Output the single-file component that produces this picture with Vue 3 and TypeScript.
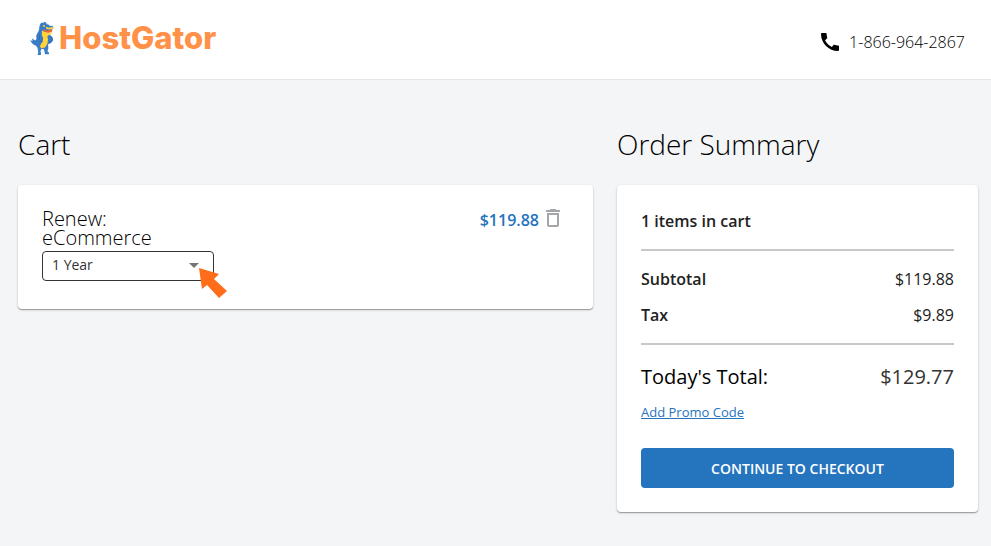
<script setup lang="ts">
import { computed, ref } from 'vue'

interface Term {
  years: number
  label: string
  price: number
}

const terms: Term[] = [{ years: 1, label: '1 Year', price: 119.88 }]
const selectedYears = ref(1)
const tax = 9.89

const subtotal = computed(
  () => terms.find((t) => t.years === selectedYears.value)?.price ?? 0,
)
const total = computed(() => subtotal.value + tax)

const money = (value: number): string => `$${value.toFixed(2)}`
</script>

<template>
  <div class="page">
    <header class="header">
      <a class="brand" href="#">
        <svg class="mascot" viewBox="0 0 26 34" aria-hidden="true">
          <path
            fill="#3a7cc8"
            d="M9.500 5 10.500 2.500 12 1.500l1.500 .5L14.500.8l1.500 .6 .8 1.800 1.700 .3 1.500 1.500 2.500-.3 1 1.500-1 2-7 3.500 2 2.500 2.500-.5 2.500 2.500 .6 3-2 2.800-3 1.200.2 4-.8 3 1.500 1.500v1.600h-4l-1-5-2.500-.5-1 2.500.6 2.500-.4 1.500H7.500l.8-3-.8-4.500-1.500-2-3-1.500L0 19.500l2.800.3-1.200-2.600 3.600 2.200L6.500 18l-.3-3.500L8 11l1-2z"
          />
          <path
            fill="#ffd236"
            d="M12 9.500l3 1.500 4 2-1 2-.7 .5.8 3-.8 4.500-2.300 3.600-3.200.6-2-1.500 1.200-2.700 1.800-2.500.3-3.500-1.300-3z"
          />
          <path fill="#ffd236" d="M16 5.800l3 .9 4-1 .5 1.600-2.800 1.200-4.500-.5z" />
          <path fill="#ffd236" d="M14.500 10.500l3.500 1.800 4.500-1.300-2 2.600-3.500 .6z" />
          <path fill="#f0662e" d="M13 8.300l4 1.200 5.500-1-.6 2.300-3.900 1.200-4-1.700z" />
          <path
            fill="none"
            stroke="#2e6bb4"
            stroke-width="1"
            d="M9.500 14l-.5 4 3 3M21 16l1.500 3-3 2.500"
          />
          <circle cx="14" cy="5" r="1" fill="#ffd236" />
        </svg>
        <span class="wordmark">HostGator</span>
      </a>
      <a class="phone" href="tel:18669642867">
        <svg class="phone-icon" viewBox="3 3 18 18" aria-hidden="true">
          <path
            d="M20.010 15.380c-1.230 0-2.420-.2-3.530-.56-.35-.12-.74-.03-1.010.24l-1.570 1.970c-2.830-1.350-5.480-3.900-6.890-6.830l1.950-1.660c.27-.28.35-.67.24-1.020-.37-1.110-.56-2.300-.56-3.530 0-.54-.45-.99-.99-.99H4.190C3.650 3 3 3.240 3 3.990 3 13.280 10.730 21 20.010 21c.71 0 .99-.63.99-1.180v-3.450c0-.54-.45-.99-.99-.99z"
          />
        </svg>
        <span>1-866-964-2867</span>
      </a>
    </header>

    <main class="content">
      <section>
        <h1 class="heading">Cart</h1>
        <div class="card cart-card">
          <div class="product">
            <h2 class="product-name">Renew:<br />eCommerce</h2>
            <div class="term">
              <select v-model="selectedYears" class="term-select" aria-label="Term">
                <option v-for="t in terms" :key="t.years" :value="t.years">
                  {{ t.label }}
                </option>
              </select>
              <svg class="caret" viewBox="0 0 10 5" aria-hidden="true">
                <path d="M0 0h10L5 5z" />
              </svg>
              <svg class="pointer" viewBox="0 0 28 30" aria-hidden="true">
                <path d="M0 0 20 6 15 11 28 23 20 30 8 17 3 21z" />
              </svg>
            </div>
          </div>
          <div class="price-group">
            <span class="price">{{ money(subtotal) }}</span>
            <button class="remove" type="button" aria-label="Remove item">
              <svg viewBox="5 3 14 18" aria-hidden="true">
                <path
                  d="M6 19c0 1.100.9 2 2 2h8c1.100 0 2-.9 2-2V7H6v12zM8 9h8v10H8V9zm7.500-5l-1-1h-5l-1 1H5v2h14V4h-3.500z"
                />
              </svg>
            </button>
          </div>
        </div>
      </section>

      <section>
        <h1 class="heading">Order Summary</h1>
        <div class="card summary-card">
          <p class="count">{{ terms.length }} items in cart</p>
          <dl class="lines">
            <div class="line">
              <dt>Subtotal</dt>
              <dd>{{ money(subtotal) }}</dd>
            </div>
            <div class="line">
              <dt>Tax</dt>
              <dd>{{ money(tax) }}</dd>
            </div>
          </dl>
          <div class="total">
            <span>Today's Total:</span>
            <span class="total-value">{{ money(total) }}</span>
          </div>
          <a class="promo" href="#">Add Promo Code</a>
          <button class="checkout" type="button">CONTINUE TO CHECKOUT</button>
        </div>
      </section>
    </main>
  </div>
</template>

<style>
body {
  margin: 0;
  background: #f4f5f7;
}
</style>

<style scoped>
.page {
  min-height: 100vh;
  box-sizing: border-box;
  background: #f4f5f7;
  color: #000;
  font-family: 'Open Sans', 'Noto Sans', sans-serif;
}

.header {
  display: flex;
  justify-content: space-between;
  box-sizing: border-box;
  height: 80px;
  padding: 20px 26px 0 30px;
  background: #fff;
  border-bottom: 1px solid #e3e5ea;
}

.brand {
  display: flex;
  align-items: center;
  gap: 3px;
  height: 36px;
  color: #ff9148;
  text-decoration: none;
}

.mascot {
  width: 26px;
  height: 34px;
}

.wordmark {
  font-family: Inter, 'Liberation Sans', sans-serif;
  font-size: 31px;
  font-weight: 800;
  line-height: 36px;
}

.phone {
  display: flex;
  align-items: center;
  gap: 10px;
  height: 44px;
  color: #000;
  font-size: 16px;
  font-weight: 300;
  text-decoration: none;
}

.phone-icon {
  width: 18px;
  height: 18px;
  fill: #000;
}

.content {
  display: grid;
  grid-template-columns: minmax(0, 1fr) 361px;
  align-items: start;
  gap: 24px;
  padding: 44px 13px 32px 18px;
}

.heading {
  margin: 0 0 20px;
  font-size: 28px;
  font-weight: 300;
  line-height: 41px;
}

.card {
  box-sizing: border-box;
  padding: 24px;
  background: #fff;
  border-radius: 4px;
  box-shadow: 0 1px 1px rgba(0, 0, 0, 0.3), 0 1px 3px rgba(0, 0, 0, 0.15);
}

.cart-card {
  display: flex;
  justify-content: space-between;
  align-items: flex-start;
  padding-bottom: 28px;
}

.product-name {
  margin: 0 0 4px;
  color: #000;
  font-size: 20px;
  font-weight: 300;
  line-height: 19px;
}

.term {
  position: relative;
  width: 172px;
}

.term-select {
  appearance: none;
  display: block;
  box-sizing: border-box;
  width: 100%;
  height: 30px;
  padding: 0 28px 3px 9px;
  border: 1px solid #333;
  border-radius: 4px;
  background: #fff;
  color: #333;
  font: 14px 'Open Sans', 'Noto Sans', sans-serif;
}

.caret {
  position: absolute;
  top: 12px;
  right: 15px;
  width: 10px;
  height: 5px;
  fill: #757575;
  pointer-events: none;
}

.pointer {
  position: absolute;
  top: 17px;
  left: 157px;
  width: 28px;
  height: 30px;
  fill: #ff6d1a;
  pointer-events: none;
}

.price-group {
  display: flex;
  align-items: center;
  gap: 7px;
  padding-right: 9px;
}

.price {
  color: #2574be;
  font-size: 16px;
  font-weight: 600;
  line-height: 22px;
}

.remove {
  display: block;
  padding: 0 0 4px;
  border: 0;
  background: none;
  cursor: pointer;
}

.remove svg {
  display: block;
  width: 14px;
  height: 18px;
  fill: #a4a7aa;
}

.count {
  margin: 0;
  padding-bottom: 16px;
  color: #222;
  font-size: 16px;
  font-weight: 600;
  line-height: 24px;
}

.lines {
  margin: 0;
  padding: 16px 0;
  border: solid #c8c8c8;
  border-width: 2px 0;
}

.line {
  display: flex;
  justify-content: space-between;
  font-size: 16px;
  line-height: 24px;
}

.line + .line {
  margin-top: 12px;
}

.line dt {
  color: #222;
  font-weight: 600;
}

.line dd {
  margin: 0;
  color: #222;
}

.total {
  display: flex;
  justify-content: space-between;
  padding-top: 18px;
  font-size: 20px;
  line-height: 28px;
}

.total-value {
  color: #333;
}

.promo {
  display: block;
  width: fit-content;
  margin: 11px 0 26px;
  color: #2574be;
  font-size: 13px;
  line-height: 20px;
}

.checkout {
  display: block;
  width: 100%;
  height: 40px;
  padding: 0;
  border: 0;
  border-radius: 4px;
  background: #2574be;
  color: #fff;
  font: 600 14px 'Open Sans', 'Noto Sans', sans-serif;
  cursor: pointer;
}
</style>
